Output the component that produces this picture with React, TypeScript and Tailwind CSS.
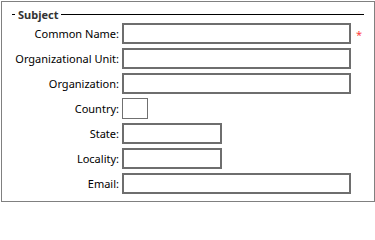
import React from "react";

type Row = { label: string; w: string; thin?: boolean; req?: boolean };

const rows: Row[] = [
  { label: "Common Name:", w: "w-[229px]", req: true },
  { label: "Organizational Unit:", w: "w-[229px]" },
  { label: "Organization:", w: "w-[229px]" },
  { label: "Country:", w: "w-[26px]", thin: true },
  { label: "State:", w: "w-[100px]" },
  { label: "Locality:", w: "w-[100px]" },
  { label: "Email:", w: "w-[229px]" },
];

export default function App() {
  return (
    <div
      className="w-[375px] h-[202px] bg-white pl-[1px] pt-[1px]"
      style={{ fontFamily: '"Noto Sans", "Liberation Sans", Arial, sans-serif' }}
    >
      <div className="w-[374px] h-[201px] border border-[#808080] pt-[6px] pr-[10px] text-black">
        <div className="flex items-center h-[13px] pl-[10px]">
          <div className="w-[3px] h-px bg-black" />
          <div className="px-[3px] text-[11px] font-bold leading-none text-[#333]">Subject</div>
          <div className="flex-1 h-px bg-black" />
        </div>
        <div className="mt-[2px] flex flex-col gap-[4px]">
          {rows.map((r) => (
            <div key={r.label} className="flex items-center h-[21px]">
              <div className="w-[117px] text-right text-[11px] leading-none text-black">{r.label}</div>
              <div
                className={
                  r.thin
                    ? `ml-[3px] h-[21px] ${r.w} border border-[#707070] bg-white`
                    : `ml-[3px] h-[21px] ${r.w} border-2 border-[#6e6e6e] bg-white`
                }
              />
              {r.req && (
                <span className="ml-[5px] text-[11px] leading-none text-[#ff4040] mt-[2px]">*</span>
              )}
            </div>
          ))}
        </div>
      </div>
    </div>
  );
}
